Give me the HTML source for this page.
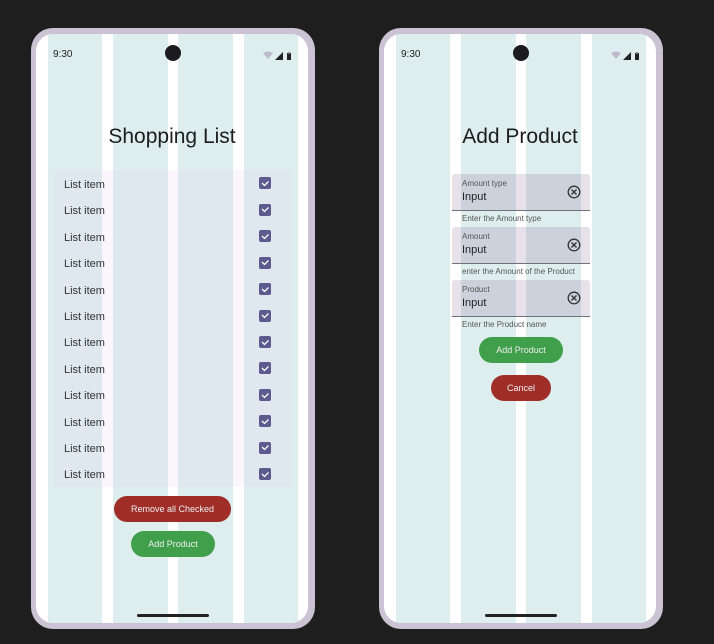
<!DOCTYPE html>
<html><head><style>
*{margin:0;padding:0;box-sizing:border-box}
body{width:714px;height:644px;background:#1e1e1e;position:relative;overflow:hidden;font-family:"Liberation Sans",Roboto,sans-serif}
.ph{position:absolute;top:28px;width:284px;height:601px;background:#cbc3d3;border-radius:22px}
.scr{position:absolute;left:5px;top:6px;width:272px;height:589px;background:#fff;border-radius:17px;overflow:hidden}
.col{position:absolute;top:0;height:100%;background:#deeeee}
.a{position:absolute}
.time{left:17px;top:15px;font-size:10px;color:#222}
.cam{left:129px;top:11px;width:16px;height:16px;border-radius:50%;background:#1b1b1f}
.title{left:0;width:272px;text-align:center;top:91px;font-size:21px;color:#1d1d20}
.list{left:18px;top:136px;width:238px;height:317px;background:rgba(230,205,240,0.18)}
.row{position:absolute;left:10px;font-size:11px;color:#333;margin-top:2px}
.cb{position:absolute;left:205px;width:12px;height:12px;background:#5c5a8e;border-radius:2px}
.btn{position:absolute;border-radius:13px;color:#eee;font-size:9px;text-align:center;line-height:26px}
.home{left:101px;top:580px;width:72px;height:3px;border-radius:2px;background:#222}
.fld{position:absolute;left:416px;width:138px;height:37px;background:rgba(95,55,115,0.15);border-bottom:1px solid #707078;border-radius:3px 3px 0 0}
.lbl{position:absolute;left:10px;top:5px;font-size:8px;color:#555}
.inp{position:absolute;left:10px;top:17px;font-size:11px;color:#222}
.help{position:absolute;left:426px;font-size:8px;color:#555}
</style></head><body>

<div class="ph" style="left:31px">
<div class="scr">
<div class="col" style="left:12px;width:54px"></div>
<div class="col" style="left:77px;width:55px"></div>
<div class="col" style="left:142px;width:55px"></div>
<div class="col" style="left:208px;width:54px"></div>
<div class="a time">9:30</div>
<div class="a cam"></div>
<svg class="a" style="left:227px;top:17px" width="32" height="10"><path d="M0 2Q5 -1 10 2L5 8Z" fill="#bbc"/><path d="M12 9L20 1V9Z" fill="#222"/><rect x="24" y="2" width="4" height="7" fill="#222"/><rect x="25" y="1" width="2" height="2" fill="#888"/></svg>
<div class="a title">Shopping List</div>
<div class="a list">
<div class="row" style="top:7px">List item</div><div class="cb" style="top:7px"></div>
<div class="row" style="top:33px">List item</div><div class="cb" style="top:34px"></div>
<div class="row" style="top:60px">List item</div><div class="cb" style="top:60px"></div>
<div class="row" style="top:86px">List item</div><div class="cb" style="top:87px"></div>
<div class="row" style="top:113px">List item</div><div class="cb" style="top:113px"></div>
<div class="row" style="top:139px">List item</div><div class="cb" style="top:140px"></div>
<div class="row" style="top:165px">List item</div><div class="cb" style="top:166px"></div>
<div class="row" style="top:192px">List item</div><div class="cb" style="top:192px"></div>
<div class="row" style="top:218px">List item</div><div class="cb" style="top:219px"></div>
<div class="row" style="top:245px">List item</div><div class="cb" style="top:245px"></div>
<div class="row" style="top:271px">List item</div><div class="cb" style="top:272px"></div>
<div class="row" style="top:297px">List item</div><div class="cb" style="top:298px"></div>
</div>
<svg class="a" style="left:0;top:0" width="272" height="460"><g fill="none" stroke="#fff" stroke-width="1.3">
<path d="M226 149l2.5 2.5 4-4"/><path d="M226 175l2.5 2.5 4-4"/><path d="M226 202l2.5 2.5 4-4"/><path d="M226 228l2.5 2.5 4-4"/><path d="M226 255l2.5 2.5 4-4"/><path d="M226 281l2.5 2.5 4-4"/><path d="M226 308l2.5 2.5 4-4"/><path d="M226 334l2.5 2.5 4-4"/><path d="M226 361l2.5 2.5 4-4"/><path d="M226 387l2.5 2.5 4-4"/><path d="M226 413l2.5 2.5 4-4"/><path d="M226 440l2.5 2.5 4-4"/>
</g></svg>
<div class="btn" style="left:78px;top:462px;width:117px;background:#9f2e29">Remove all Checked</div>
<div class="btn" style="left:95px;top:497px;width:84px;background:#3f9f4a">Add Product</div>
<div class="a home"></div>
</div></div>

<div class="ph" style="left:379px">
<div class="scr">
<div class="col" style="left:12px;width:54px"></div>
<div class="col" style="left:77px;width:55px"></div>
<div class="col" style="left:142px;width:55px"></div>
<div class="col" style="left:208px;width:54px"></div>
<div class="a time">9:30</div>
<div class="a cam"></div>
<svg class="a" style="left:227px;top:17px" width="32" height="10"><path d="M0 2Q5 -1 10 2L5 8Z" fill="#bbc"/><path d="M12 9L20 1V9Z" fill="#222"/><rect x="24" y="2" width="4" height="7" fill="#222"/><rect x="25" y="1" width="2" height="2" fill="#888"/></svg>
<div class="a title">Add Product</div>
<div class="btn" style="left:95px;top:303px;width:84px;background:#3f9f4a">Add Product</div>
<div class="btn" style="left:107px;top:341px;width:60px;background:#9f2e29">Cancel</div>
<div class="a home"></div>
</div></div>

<div class="fld" style="left:452px;top:174px"><div class="lbl">Amount type</div><div class="inp">Input</div></div>
<div class="help" style="left:462px;top:214px">Enter the Amount type</div>
<div class="fld" style="left:452px;top:227px"><div class="lbl">Amount</div><div class="inp">Input</div></div>
<div class="help" style="left:462px;top:267px">enter the Amount of the Product</div>
<div class="fld" style="left:452px;top:280px"><div class="lbl">Product</div><div class="inp">Input</div></div>
<div class="help" style="left:462px;top:320px">Enter the Product name</div>
<svg class="a" style="left:0;top:0" width="714" height="644"><g fill="none" stroke="#333" stroke-width="1.3">
<circle cx="574" cy="192" r="5.8"/><path d="M571.5 189.5l5 5M576.5 189.5l-5 5"/>
<circle cx="574" cy="245" r="5.8"/><path d="M571.5 242.5l5 5M576.5 242.5l-5 5"/>
<circle cx="574" cy="298" r="5.8"/><path d="M571.5 295.5l5 5M576.5 295.5l-5 5"/>
</g></svg>
</body></html>
